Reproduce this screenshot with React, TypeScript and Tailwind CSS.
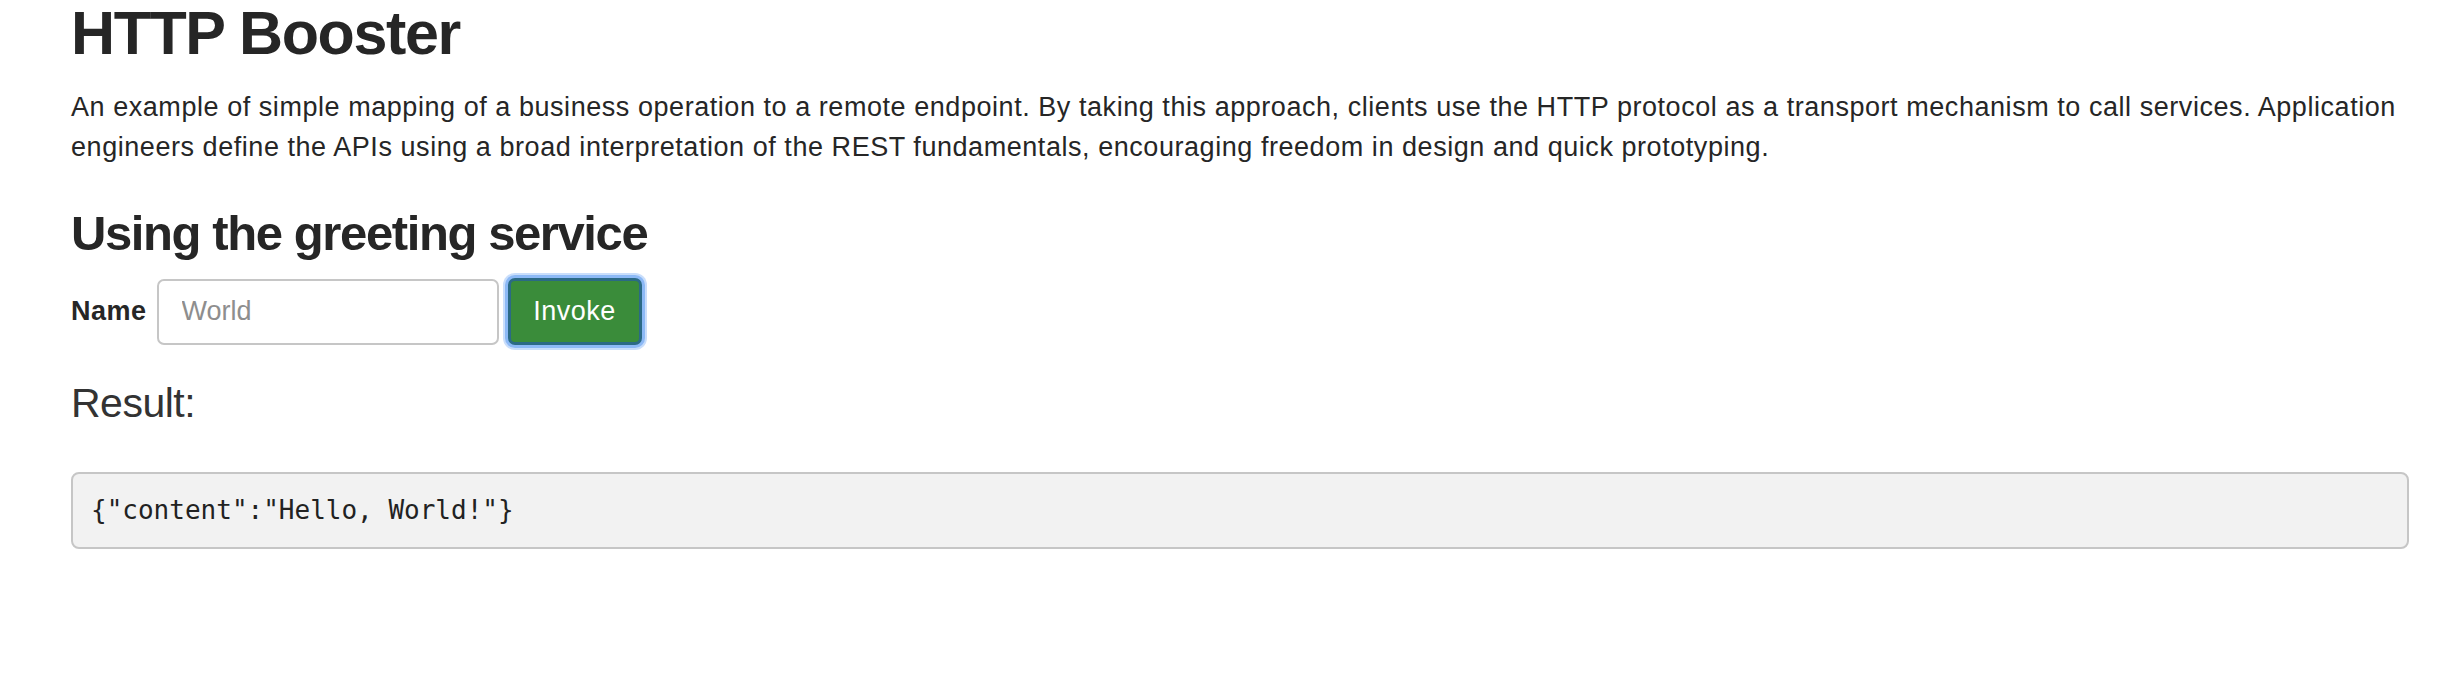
import React from "react";

export default function App() {
  return (
    <div className="min-h-[684px] w-[2448px] bg-white text-[#262626] [font-family:'Liberation_Sans',Arial,sans-serif]">
      <div className="w-[2409px] pl-[71px]">
        <h1 className="m-0 text-[61px] font-bold leading-[66px] tracking-[-1.4px]">HTTP Booster</h1>
        <p className="mt-[21px] mb-0 w-[2377px] text-[27px] leading-[40px] tracking-[0.55px]">
          An example of simple mapping of a business operation to a remote endpoint. By taking this approach, clients use
          the HTTP protocol as a transport mechanism to call services. Application engineers define the APIs using a broad
          interpretation of the REST fundamentals, encouraging freedom in design and quick prototyping.
        </p>
        <h2 className="mt-[39px] mb-0 text-[49px] font-bold leading-[54px] tracking-[-1.4px]">Using the greeting service</h2>
        <div className="mt-[18px] flex items-center">
          <label className="text-[27px] font-bold leading-[37px] tracking-[0.5px]">Name</label>
          <input
            className="ml-[10px] h-[66px] w-[342px] rounded-[7px] border-2 border-[#c6c6c6] bg-white px-[23px] text-[27px] text-[#333] outline-none placeholder:text-[#8e8e8e]"
            placeholder="World"
          />
          <button className="ml-[9px] h-[67px] w-[134px] rounded-[7px] border-[3px] border-[#2b6a86] bg-[#3a8c3a] text-[27px] tracking-[0.5px] text-white shadow-[0_0_0_3px_#8cb9f6,0_0_0_5px_#c9defb]">
            Invoke
          </button>
        </div>
        <h3 className="mt-[35px] mb-0 text-[41px] font-normal leading-[46px] text-[#333] tracking-[-0.5px]">Result:</h3>
        <pre className="mt-[46px] mb-0 rounded-[8px] border-2 border-[#c6c6c6] bg-[#f2f2f2] p-[18px] text-[26px] leading-[37px] text-[#222] [font-family:'DejaVu_Sans_Mono',monospace]">
          {'{"content":"Hello, World!"}'}
        </pre>
      </div>
    </div>
  );
}
